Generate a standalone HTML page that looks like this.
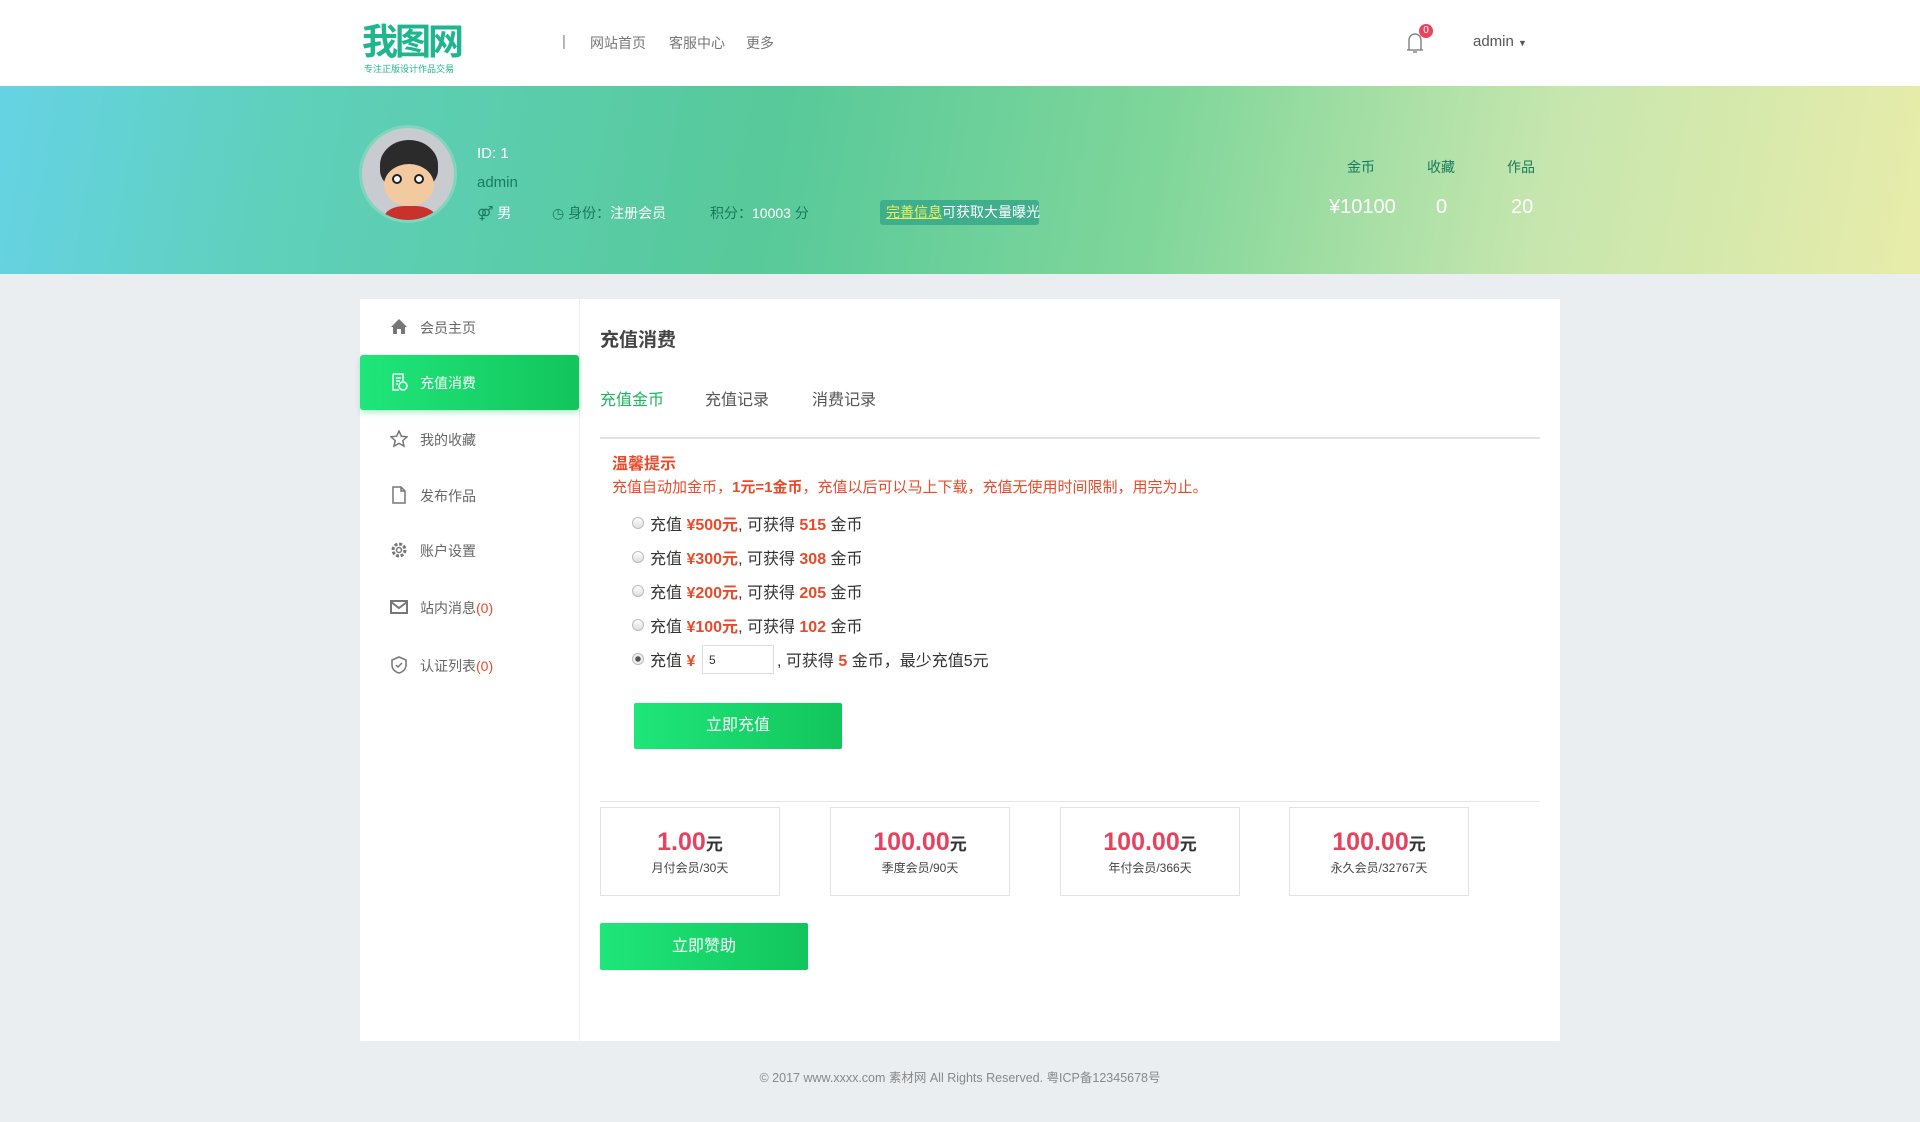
<!DOCTYPE html>
<html><head><meta charset="utf-8"><style>
*{margin:0;padding:0;box-sizing:border-box}
body{width:1920px;height:1122px;background:#ebeef1;font-family:"Liberation Sans","Noto Sans CJK SC",sans-serif;position:relative;overflow:hidden;color:#555}
.a{position:absolute;white-space:nowrap}
.hdr{position:absolute;left:0;top:0;width:1920px;height:86px;background:#fff}
.ban{position:absolute;left:0;top:86px;width:1920px;height:188px;background:linear-gradient(100deg,#66d3e4 0%,#5fd0bb 15%,#57c99a 40%,#7fd69a 60%,#c6e6ae 80%,#e8ecaa 100%)}
.card{position:absolute;left:360px;top:299px;width:1200px;height:742px;background:#fff}
.side{position:absolute;left:360px;top:299px;width:220px;height:742px;border-right:1px solid #eee}
.si{position:absolute;left:360px;width:219px;height:55px;font-size:14px;color:#666;display:flex;align-items:center;padding-left:60px}
.si svg{position:absolute;left:30px;top:18px}
.act{background:linear-gradient(90deg,#1fe67a,#12c55c);color:#fff;border-radius:3px;box-shadow:0 3px 6px rgba(20,200,100,.3)}
.red{color:#e84a2a;font-weight:bold}
.rad{position:absolute;left:632px;width:12px;height:12px;border:1px solid #bbb;border-radius:50%;background:linear-gradient(#fff,#ddd)}
.rl{position:absolute;left:650px;font-size:16px;color:#333;white-space:nowrap}
.btn{position:absolute;background:linear-gradient(90deg,#1fe67a,#12c55c);color:#fff;font-size:16px;text-align:center;border-radius:2px}
.pc{position:absolute;top:807px;width:180px;height:89px;border:1px solid #e3e3e3;text-align:center}
.pc b{display:block;margin-top:20px;font-size:25px;color:#e5425f}
.pc b span{font-size:17px;color:#333}
.pc i{display:block;font-style:normal;font-size:12px;color:#444;margin-top:2px}
</style></head><body>
<div class="hdr"></div>
<div class="a" style="left:362px;top:22px;font-size:36px;font-weight:bold;color:#1fb58f;letter-spacing:-3px;line-height:40px">我图网</div>
<div class="a" style="left:364px;top:62px;font-size:9px;color:#1fb58f">专注正版设计作品交易</div>
<div class="a" style="left:562px;top:33px;font-size:15px;color:#888">|</div>
<div class="a" style="left:590px;top:33px;font-size:14px;color:#777">网站首页</div>
<div class="a" style="left:669px;top:33px;font-size:14px;color:#777">客服中心</div>
<div class="a" style="left:746px;top:33px;font-size:14px;color:#777">更多</div>
<svg class="a" style="left:1404px;top:30px" width="22" height="24" viewBox="0 0 22 24"><path d="M5 20V10a6 6 0 0 1 12 0v10M3 20h16M9 22h4" fill="none" stroke="#888" stroke-width="1.5"/></svg>
<div class="a" style="left:1419px;top:24px;width:14px;height:14px;border-radius:50%;background:#e8445a;color:#fff;font-size:10px;text-align:center;line-height:14px">0</div>
<div class="a" style="left:1473px;top:33px;font-size:15px;color:#555">admin <span style="font-size:9px">▼</span></div>

<div class="ban"></div>
<div class="a" style="left:359px;top:125px;width:98px;height:98px;border-radius:50%;background:#c8cbd0;border:3px solid #7fd6bd;overflow:hidden">
<div style="position:absolute;left:18px;top:12px;width:58px;height:50px;border-radius:50% 50% 40% 40%;background:#2b2b2b"></div>
<div style="position:absolute;left:22px;top:36px;width:50px;height:42px;border-radius:50%;background:#f3c9a0"></div>
<div style="position:absolute;left:30px;top:46px;width:10px;height:10px;border-radius:50%;background:#fff;border:2px solid #222"></div>
<div style="position:absolute;left:52px;top:46px;width:10px;height:10px;border-radius:50%;background:#fff;border:2px solid #222"></div>
<div style="position:absolute;left:22px;top:78px;width:52px;height:30px;border-radius:40% 40% 0 0;background:#c9312c"></div>
</div>
<div class="a" style="left:477px;top:145px;font-size:15px;color:#fff">ID: 1</div>
<div class="a" style="left:477px;top:174px;font-size:15px;color:#1a7a5e">admin</div>
<div class="a" style="left:477px;top:203px;font-size:14px;color:#1a7a5e">⚤ <span style="color:#fff">男</span></div>
<div class="a" style="left:552px;top:203px;font-size:14px;color:#1a7a5e">◷ 身份：<span style="color:#fff">注册会员</span></div>
<div class="a" style="left:710px;top:203px;font-size:14px;color:#1a7a5e">积分：<span style="color:#fff">10003</span> 分</div>
<div class="a" style="left:880px;top:200px;width:159px;height:25px;background:#3fae8c;border-radius:3px;font-size:14px;color:#fff;line-height:25px;padding-left:6px"><span style="color:#ecf05a;text-decoration:underline">完善信息</span>可获取大量曝光</div>
<div class="a" style="left:1347px;top:157px;font-size:14px;color:#1a7a5e">金币</div>
<div class="a" style="left:1427px;top:157px;font-size:14px;color:#1a7a5e">收藏</div>
<div class="a" style="left:1507px;top:157px;font-size:14px;color:#1a7a5e">作品</div>
<div class="a" style="left:1329px;top:196px;font-size:20px;color:#fff">¥10100</div>
<div class="a" style="left:1436px;top:196px;font-size:20px;color:#fff">0</div>
<div class="a" style="left:1511px;top:196px;font-size:20px;color:#fff">20</div>

<div class="card"></div>
<div class="side"></div>
<div class="si" style="top:300px"><svg width="18" height="18" viewBox="0 0 18 18"><path d="M9 1L1 9h2v7h4v-5h4v5h4V9h2z" fill="#777"/></svg>会员主页</div>
<div class="si act" style="top:355px"><svg width="18" height="18" viewBox="0 0 18 18"><path d="M3 1h10v7M3 1v16h6M6 5h5M6 8h4M6 11h2" fill="none" stroke="#fff" stroke-width="1.5"/><circle cx="13" cy="13" r="4" fill="none" stroke="#fff" stroke-width="1.5"/></svg>充值消费</div>
<div class="si" style="top:412px"><svg width="18" height="18" viewBox="0 0 18 18"><path d="M9 1l2.4 5.2 5.6.6-4.2 3.8 1.2 5.6L9 13.4 4 16.2l1.2-5.6L1 6.8l5.6-.6z" fill="none" stroke="#777" stroke-width="1.5"/></svg>我的收藏</div>
<div class="si" style="top:468px"><svg width="18" height="18" viewBox="0 0 18 18"><path d="M3 1h8l4 4v12H3zM11 1v4h4" fill="none" stroke="#777" stroke-width="1.5"/></svg>发布作品</div>
<div class="si" style="top:523px"><svg width="18" height="18" viewBox="0 0 18 18"><circle cx="9" cy="9" r="6" fill="none" stroke="#777" stroke-width="3" stroke-dasharray="3 1.7"/><circle cx="9" cy="9" r="2.5" fill="none" stroke="#777" stroke-width="1.5"/></svg>账户设置</div>
<div class="si" style="top:580px"><svg width="18" height="18" viewBox="0 0 18 18"><rect x="1" y="3" width="16" height="12" fill="none" stroke="#777" stroke-width="2"/><path d="M1 4l8 6 8-6" fill="none" stroke="#777" stroke-width="2"/></svg>站内消息<span style="color:#e84a2a">(0)</span></div>
<div class="si" style="top:638px"><svg width="18" height="18" viewBox="0 0 18 18"><path d="M9 1l7 3v5c0 4-3 7-7 8-4-1-7-4-7-8V4z" fill="none" stroke="#777" stroke-width="1.5"/><path d="M6 9l2 2 4-4" fill="none" stroke="#777" stroke-width="1.5"/></svg>认证列表<span style="color:#e84a2a">(0)</span></div>

<div class="a" style="left:600px;top:325px;font-size:19px;font-weight:bold;color:#444">充值消费</div>
<div class="a" style="left:600px;top:386px;font-size:16px;color:#1bb55c">充值金币</div>
<div class="a" style="left:705px;top:386px;font-size:16px;color:#555">充值记录</div>
<div class="a" style="left:812px;top:386px;font-size:16px;color:#555">消费记录</div>
<div class="a" style="left:600px;top:437px;width:940px;height:2px;background:#e2e2e2"></div>
<div class="a red" style="left:612px;top:450px;font-size:16px">温馨提示</div>
<div class="a" style="left:612px;top:476px;font-size:15px;color:#e84a2a">充值自动加金币，<b>1元=1金币</b>，充值以后可以马上下载，充值无使用时间限制，用完为止。</div>
<div class="rad" style="top:517px"></div><div class="rl" style="top:511px">充值 <span class="red">¥500元</span>, 可获得 <span class="red">515</span> 金币</div>
<div class="rad" style="top:551px"></div><div class="rl" style="top:545px">充值 <span class="red">¥300元</span>, 可获得 <span class="red">308</span> 金币</div>
<div class="rad" style="top:585px"></div><div class="rl" style="top:579px">充值 <span class="red">¥200元</span>, 可获得 <span class="red">205</span> 金币</div>
<div class="rad" style="top:619px"></div><div class="rl" style="top:613px">充值 <span class="red">¥100元</span>, 可获得 <span class="red">102</span> 金币</div>
<div class="rad" style="top:653px;background:radial-gradient(circle,#555 2.5px,#eee 3px)"></div><div class="rl" style="top:647px">充值 <span class="red">¥</span></div>
<div class="a" style="left:702px;top:645px;width:72px;height:29px;border:1px solid #ddd;font-size:12px;color:#333;padding:7px 6px">5</div>
<div class="rl" style="left:777px;top:647px">, 可获得 <span class="red">5</span> 金币，最少充值5元</div>
<div class="btn" style="left:634px;top:703px;width:208px;height:46px;line-height:46px">立即充值</div>
<div class="a" style="left:600px;top:801px;width:940px;height:1px;background:#e5e5e5"></div>
<div class="pc" style="left:600px"><b>1.00<span>元</span></b><i>月付会员/30天</i></div>
<div class="pc" style="left:830px"><b>100.00<span>元</span></b><i>季度会员/90天</i></div>
<div class="pc" style="left:1060px"><b>100.00<span>元</span></b><i>年付会员/366天</i></div>
<div class="pc" style="left:1289px"><b>100.00<span>元</span></b><i>永久会员/32767天</i></div>
<div class="btn" style="left:600px;top:923px;width:208px;height:47px;line-height:47px">立即赞助</div>
<div class="a" style="left:0;width:1920px;text-align:center;top:1067px;font-size:12.5px;color:#888">© 2017 www.xxxx.com 素材网 All Rights Reserved. 粤ICP备12345678号</div>
</body></html>
